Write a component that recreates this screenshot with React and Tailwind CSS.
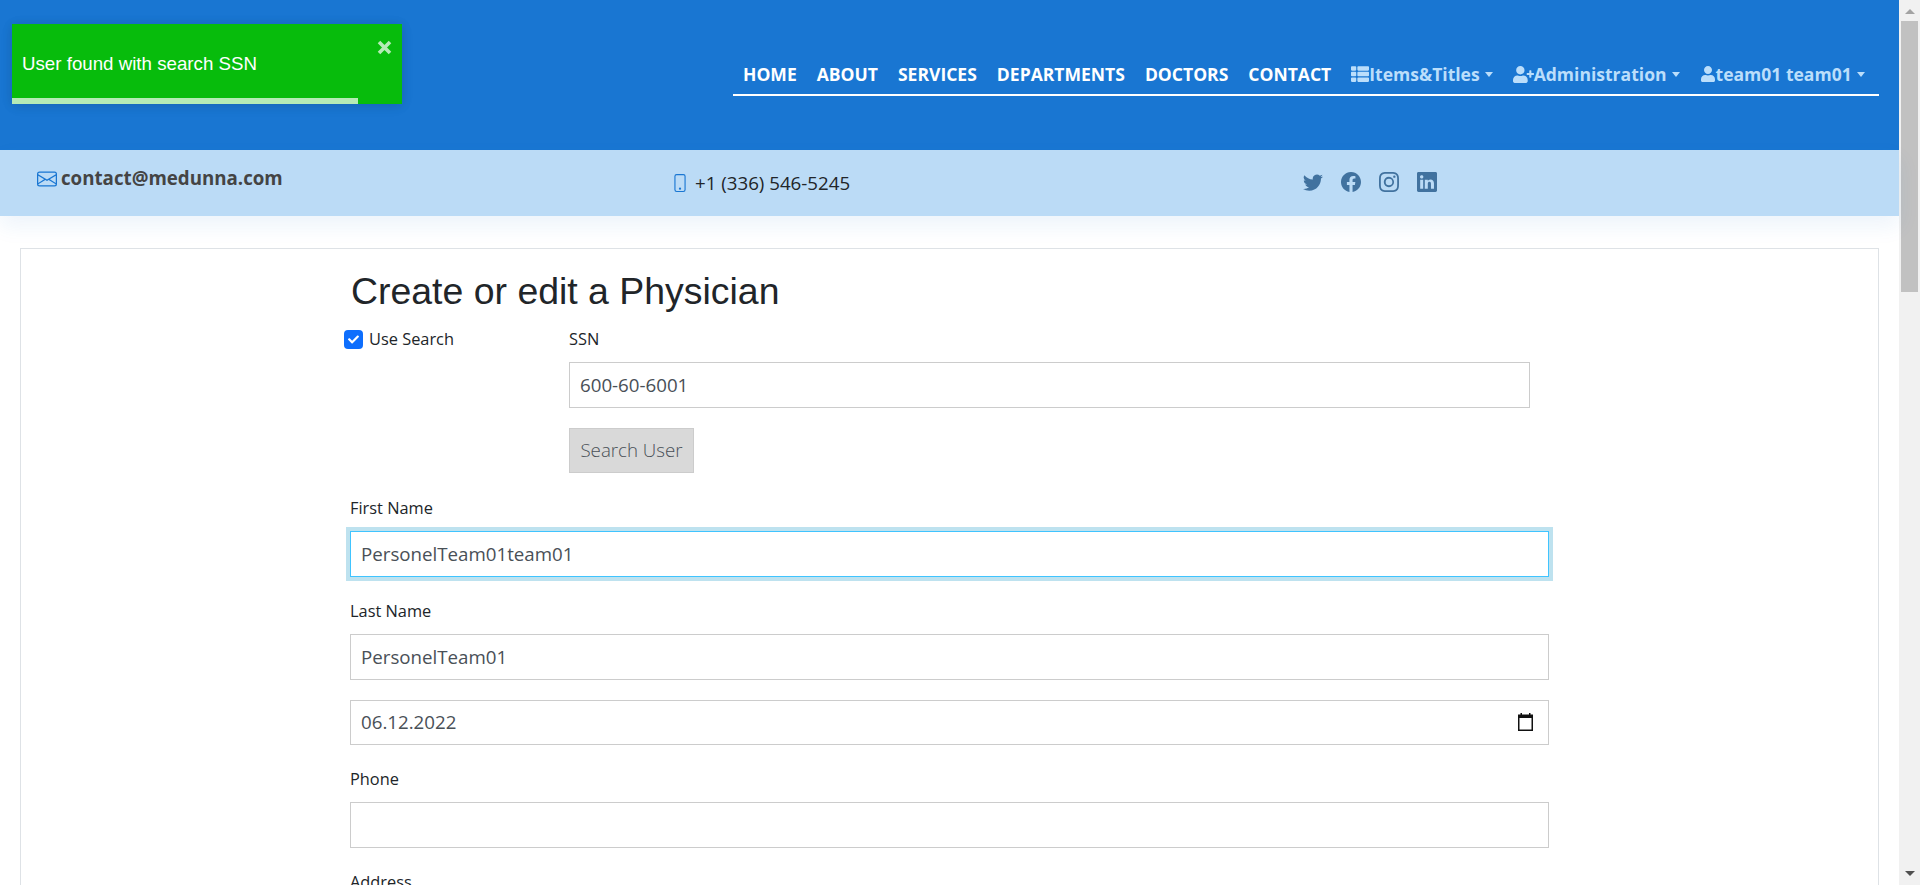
import React from 'react';
import { FaThList, FaUserPlus, FaUser, FaCheck } from 'react-icons/fa';
import { BsEnvelope, BsPhone, BsTwitter, BsFacebook, BsInstagram, BsLinkedin } from 'react-icons/bs';

const MAIN_LINKS = ['HOME', 'ABOUT', 'SERVICES', 'DEPARTMENTS', 'DOCTORS', 'CONTACT'];

const inputClass = 'block h-[46px] w-full border bg-white px-[10px] pb-[2px] text-[18.72px] text-[#495057] outline-none';

function Caret() {
  return <span className="ml-[5px] h-0 w-0 border-x-[4.5px] border-t-[5px] border-x-transparent border-t-[#bbdefb]" />;
}

function DropLink({ icon, label }) {
  return (
    <span className="flex h-[30px] items-center text-[#bbdefb]">
      {icon}
      {label}
      <Caret />
    </span>
  );
}

function Field({ label, value, focused }) {
  return (
    <div className="mt-[22px]">
      <label className="mb-[10px] block h-[25px] text-[16.38px] leading-[25px] text-[#212529]">{label}</label>
      <input
        readOnly
        value={value}
        className={focused ? `${inputClass} border-[#40c4ff] shadow-[0_0_0_4px_#bee2ef]` : `${inputClass} border-[#ccc]`}
      />
    </div>
  );
}

export default function App() {
  return (
    <div className="flex h-[885px] w-[1920px] overflow-hidden bg-white font-['Open_Sans',sans-serif]">
      <div className="relative min-w-0 flex-1">
        <header className="h-[150px] bg-[#1976d2]">
          <div className="flex justify-end pt-[59px] pr-[20px]">
            <nav className="flex h-[37px] w-[1146px] items-start gap-[20px] border-b-2 border-white pl-[10px] text-[17.55px] leading-[30px] font-bold">
              {MAIN_LINKS.map(l => (
                <span key={l} className="text-white">{l}</span>
              ))}
              <DropLink icon={<FaThList className="text-[18px]" />} label="Items&Titles" />
              <DropLink icon={<FaUserPlus className="text-[21px]" />} label="Administration" />
              <DropLink icon={<FaUser className="text-[16px]" />} label="team01 team01" />
            </nav>
          </div>
        </header>

        <div className="relative grid h-[66px] grid-cols-[634px_632px_1fr] bg-[#bbdbf6] pl-[37px] shadow-[0_10px_20px_rgba(25,118,210,0.08)]">
          <div className="flex h-[57px] items-center text-[18.72px] font-bold text-[#444]">
            <BsEnvelope className="mr-[4px] text-[20px] text-[#1976d2]" />
            contact@medunna.com
          </div>
          <div className="flex h-[66px] items-center text-[18.72px] text-[#212529]">
            <BsPhone className="mr-[6px] text-[18px] text-[#1976d2]" />
            +1 (336) 546-5245
          </div>
          <div className="flex h-[64px] items-center gap-[18px] text-[20px] text-[#41729f]">
            <BsTwitter />
            <BsFacebook />
            <BsInstagram />
            <BsLinkedin />
          </div>
        </div>

        <main className="mx-[20px] mt-[32px] h-[800px] border border-[#dee2e6] pl-[329px]">
          <div className="w-[1199px]">
            <h2 className="mt-[19px] ml-[1px] h-[46px] font-['Liberation_Sans',sans-serif] text-[37.44px] leading-[46px] font-normal text-[#212529]">
              Create or edit a Physician
            </h2>
            <div className="mt-[13px] flex">
              <div className="ml-[-6px] flex h-[25px] w-[225px] items-center text-[16.38px] text-[#212529]">
                <span className="mr-[6px] flex h-[19px] w-[19px] items-center justify-center rounded-[4px] bg-[#0d6efd] text-[11px] text-white">
                  <FaCheck />
                </span>
                Use Search
              </div>
              <div className="w-[961px]">
                <label className="block h-[25px] text-[16.38px] leading-[25px] text-[#212529]">SSN</label>
                <input readOnly value="600-60-6001" className={`${inputClass} mt-[10px] border-[#ccc]`} />
                <button className="mt-[20px] mb-[1px] block h-[45px] w-[125px] border border-[#ccc] bg-[#d9d9d9] text-[18.72px] font-light text-[#495057]">
                  Search User
                </button>
              </div>
            </div>
            <Field label="First Name" value="PersonelTeam01team01" focused />
            <Field label="Last Name" value="PersonelTeam01" />
            <div className="mt-[20px] mb-[1px] flex h-[45px] w-full items-center justify-between border border-[#ccc] bg-white pr-[15px] pl-[10px] pb-[1px] text-[18.72px] text-[#495057]">
              06.12.2022
              <svg width="15" height="18" viewBox="0 0 15 18" className="mb-[1px]">
                <path d="M2.5 0h1.5v1.5h7V0h1.5v1.5H15V18H0V1.5h2.5z" fill="#111" />
                <rect x="1.5" y="5" width="12" height="11.5" fill="#fff" />
              </svg>
            </div>
            <Field label="Phone" value="" />
            <Field label="Address" value="" />
          </div>
        </main>

        <div className="absolute top-[24px] left-[12px] h-[80px] w-[390px] bg-[#07bc0c] font-['Liberation_Sans',sans-serif] text-white shadow-[0_1px_10px_rgba(0,0,0,0.1),0_2px_15px_rgba(0,0,0,0.05)]">
          <div className="pt-[28px] pl-[10px] text-[18.72px] leading-[24px]">User found with search SSN</div>
          <svg width="15" height="15" viewBox="0 0 15 15" className="absolute top-[16px] right-[10px] opacity-70">
            <path d="M2 2l11 11M13 2L2 13" stroke="#fff" strokeWidth="3.6" />
          </svg>
          <div className="absolute bottom-0 left-0 h-[6px] w-[346px] bg-white/70" />
        </div>
      </div>

      <div className="flex w-[21px] shrink-0 flex-col items-center bg-[#f1f1f1]">
        <span className="mt-[9px] h-0 w-0 border-x-[5px] border-b-[5px] border-x-transparent border-b-[#a3a3a3]" />
        <span className="mt-[7px] h-[271px] w-[17px] bg-[#c1c1c1]" />
        <span className="mt-auto mb-[9px] h-0 w-0 border-x-[5px] border-t-[5px] border-x-transparent border-t-[#505050]" />
      </div>
    </div>
  );
}
